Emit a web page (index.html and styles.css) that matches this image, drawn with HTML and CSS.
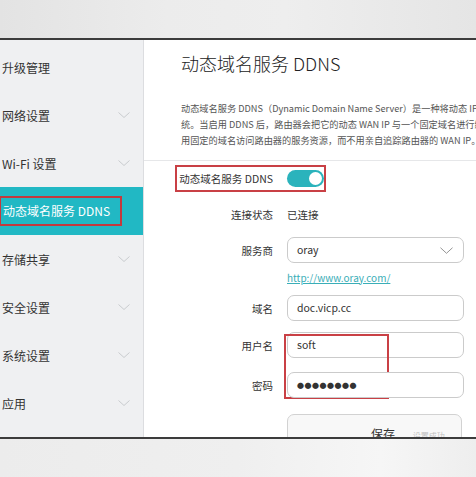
FILE: index.html
```html
<!DOCTYPE html>
<html lang="zh-CN">
<head>
<meta charset="utf-8">
<title>动态域名服务 DDNS</title>
<link rel="stylesheet" href="styles.css">
</head>
<body>
<div class="screen">
  <div class="topbar"></div>
  <div class="main">
    <nav class="sidebar">
      <div class="nav-item"><span>升级管理</span></div>
      <div class="nav-item"><span>网络设置</span><svg class="chev" viewBox="0 0 12 6"><polyline points="0.5,0.5 6,5.5 11.5,0.5"/></svg></div>
      <div class="nav-item"><span>Wi-Fi 设置</span><svg class="chev" viewBox="0 0 12 6"><polyline points="0.5,0.5 6,5.5 11.5,0.5"/></svg></div>
      <div class="nav-item active"><span class="mark">动态域名服务 DDNS</span></div>
      <div class="nav-item"><span>存储共享</span><svg class="chev" viewBox="0 0 12 6"><polyline points="0.5,0.5 6,5.5 11.5,0.5"/></svg></div>
      <div class="nav-item"><span>安全设置</span><svg class="chev" viewBox="0 0 12 6"><polyline points="0.5,0.5 6,5.5 11.5,0.5"/></svg></div>
      <div class="nav-item"><span>系统设置</span><svg class="chev" viewBox="0 0 12 6"><polyline points="0.5,0.5 6,5.5 11.5,0.5"/></svg></div>
      <div class="nav-item"><span>应用</span><svg class="chev" viewBox="0 0 12 6"><polyline points="0.5,0.5 6,5.5 11.5,0.5"/></svg></div>
    </nav>
    <section class="content">
      <h1 class="title">动态域名服务 DDNS</h1>
      <div class="desc">
        <div>动态域名服务 DDNS（Dynamic Domain Name Server）是一种将动态 IP 地址映射到一个固定的域名解析服务上的系</div>
        <div>统。当启用 DDNS 后，路由器会把它的动态 WAN IP 与一个固定域名进行绑定，这样用户可以使</div>
        <div>用固定的域名访问路由器的服务资源，而不用亲自追踪路由器的 WAN IP。</div>
      </div>
      <div class="divider"></div>
      <div class="form">
        <div class="row r-toggle">
          <div class="label">动态域名服务 DDNS</div>
          <div class="field"><span class="toggle"><span class="knob"></span></span></div>
          <div class="annot annot-toggle"></div>
        </div>
        <div class="row r-status">
          <div class="label">连接状态</div>
          <div class="field"><span class="value">已连接</span></div>
        </div>
        <div class="row r-box">
          <div class="label">服务商</div>
          <div class="field"><div class="input select"><span>oray</span><svg class="sel-chev" viewBox="0 0 14 7"><polyline points="0.5,0.5 7,6.5 13.5,0.5"/></svg></div></div>
        </div>
        <div class="row r-link">
          <div class="label"></div>
          <div class="field"><span class="link">http://www.oray.com/</span></div>
        </div>
        <div class="row r-box r-domain">
          <div class="label">域名</div>
          <div class="field"><div class="input">doc.vicp.cc</div></div>
        </div>
        <div class="row r-box r-user">
          <div class="label">用户名</div>
          <div class="field"><div class="input">soft</div></div>
          <div class="annot annot-cred"></div>
        </div>
        <div class="row r-box r-pass">
          <div class="label">密码</div>
          <div class="field"><div class="input dots">●●●●●●●●</div></div>
        </div>
        <div class="row r-save">
          <div class="label"></div>
          <div class="field"><div class="btn"><span>保存</span><span class="ghost">， 设置成功</span></div></div>
        </div>
      </div>
    </section>
  </div>
  <div class="bottombar"></div>
</div>
</body>
</html>
```
FILE: styles.css
```css
html, body {
  margin: 0;
  padding: 0;
}
body {
  font-family: "Noto Sans CJK SC", "Noto Sans", sans-serif;
  background: #ffffff;
}
.screen {
  width: 476px;
  height: 477px;
  overflow: hidden;
  display: flex;
  flex-direction: column;
}
.topbar {
  height: 38px;
  flex: none;
  background: linear-gradient(90deg, #e3e3e3 0%, #ececec 35%, #eeeeee 60%, #e5e5e5 100%);
  border-bottom: 2px solid #3c3c3c;
}
.main {
  height: 397px;
  flex: none;
  display: flex;
  overflow: hidden;
}
.sidebar {
  width: 143px;
  flex: none;
  background: #eff0f2;
  border-right: 1px solid #dcdde0;
  padding-top: 3px;
  box-sizing: content-box;
}
.nav-item {
  height: 48px;
  display: flex;
  align-items: center;
  justify-content: space-between;
  padding: 0 13px 0 2px;
  font-size: 12px;
  color: #333;
  white-space: nowrap;
}
.nav-item.active {
  background: #21b8c4;
  color: #ffffff;
  padding-left: 0;
}
.mark {
  display: inline-block;
  height: 26px;
  line-height: 26px;
  padding: 0 10px 0 2px;
  border: 2px solid #c4393d;
  border-left-width: 1px;
}
.chev {
  width: 12px;
  height: 6px;
  fill: none;
  stroke: #c9cbce;
  stroke-width: 1;
}
.content {
  flex: 1;
  background: #ffffff;
  overflow: hidden;
  position: relative;
}
.title {
  margin: 11px 0 0 0;
  padding-left: 37px;
  height: 24px;
  line-height: 24px;
  font-size: 18px;
  font-weight: 300;
  color: #222;
  white-space: nowrap;
}
.desc {
  margin-top: 25px;
  padding-left: 37px;
  font-size: 9.2px;
  line-height: 16px;
  color: #555;
  white-space: nowrap;
}
.divider {
  margin-top: 12px;
  border-top: 1px solid #e6e7e9;
}
.form {
  display: flex;
  flex-direction: column;
}
.row {
  display: flex;
  align-items: center;
  position: relative;
}
.label {
  width: 129px;
  flex: none;
  text-align: right;
  font-size: 10.5px;
  color: #333;
  white-space: nowrap;
}
.field {
  margin-left: 14px;
  width: 177px;
  flex: none;
  font-size: 10.5px;
  color: #333;
}
.r-toggle { margin-top: 4px; height: 26px; }
.r-status { margin-top: 13px; height: 20px; }
.r-box { height: 26px; margin-top: 13px; }
.r-link { margin-top: 7px; height: 14px; }
.r-domain { margin-top: 11px; }
.r-user { margin-top: 11px; }
.r-pass { margin-top: 14px; }
.r-save { margin-top: 16px; height: 30px; align-items: flex-start; }
.toggle {
  display: block;
  width: 37px;
  height: 17px;
  border-radius: 9px;
  background: #2bb3bc;
  position: relative;
}
.knob {
  position: absolute;
  right: 2px;
  top: 2px;
  width: 13px;
  height: 13px;
  border-radius: 50%;
  background: #ffffff;
}
.value {
  color: #333;
}
.input {
  height: 24px;
  line-height: 24px;
  border: 1px solid #cbcbcb;
  border-radius: 7px;
  padding-left: 9px;
  background: #fff;
  font-size: 10.5px;
  color: #333;
  display: flex;
  align-items: center;
  justify-content: space-between;
}
.dots {
  font-size: 7px;
  letter-spacing: 0.5px;
  color: #333;
}
.sel-chev {
  width: 13px;
  height: 7px;
  margin-right: 10px;
  fill: none;
  stroke: #8d8d8d;
  stroke-width: 1;
}
.link {
  font-size: 10px;
  color: #3aaeb7;
  text-decoration: underline;
}
.btn {
  height: 30px;
  width: 175px;
  border: 1px solid #d2d2d2;
  border-radius: 7px;
  background: #f8f8f8;
  font-size: 12px;
  color: #333;
  padding-top: 10px;
  padding-left: 83px;
  box-sizing: border-box;
  white-space: nowrap;
}
.ghost {
  margin-left: 8px;
  font-size: 8px;
  color: #c2c2c2;
}
.annot {
  position: absolute;
  border: 2px solid #c94045;
  pointer-events: none;
}
.annot-toggle {
  left: 31px;
  top: 0;
  width: 147px;
  height: 23px;
}
.annot-cred {
  left: 140px;
  top: 2px;
  width: 101px;
  height: 61px;
}
.bottombar {
  flex: 1;
  border-top: 2px solid #3c3c3c;
  background: linear-gradient(90deg, #ececec 0%, #efefef 50%, #f6f6f6 80%, #eeeeee 100%);
}
```
